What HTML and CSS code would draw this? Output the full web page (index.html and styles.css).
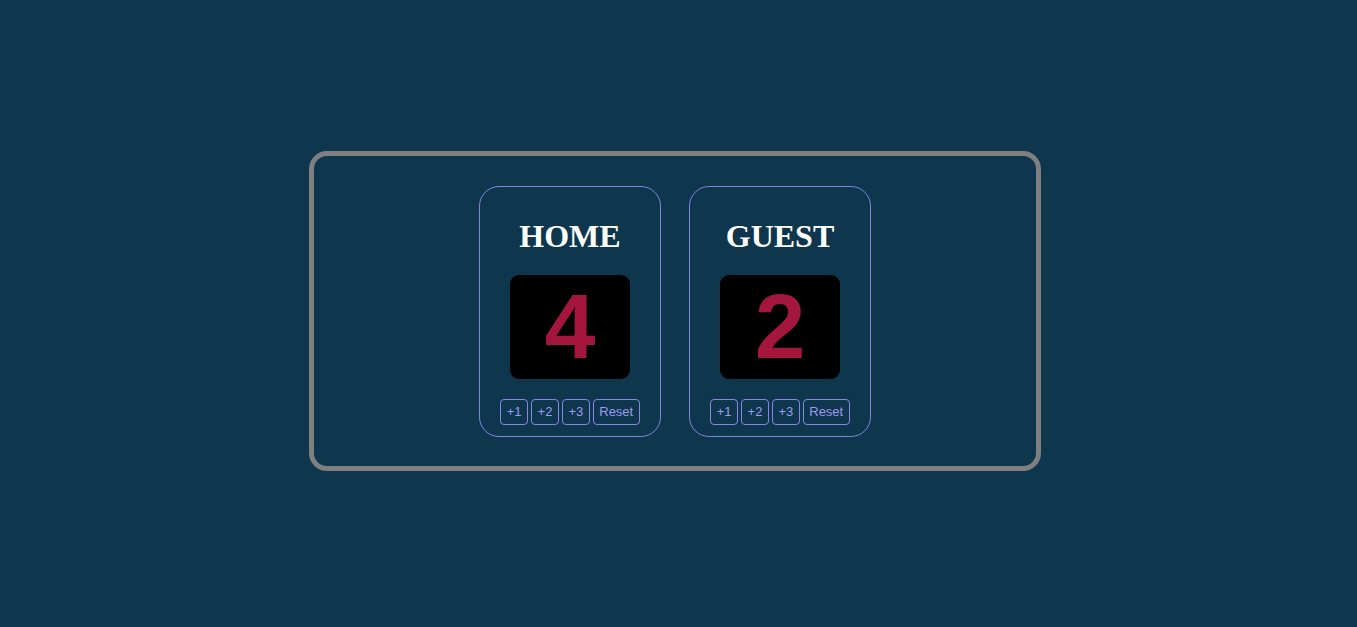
FILE: index.html
```html
<!DOCTYPE html>
<html>
<head>
<meta charset="utf-8">
<link rel="stylesheet" href="styles.css">
</head>
<body>
<main class="board">
  <section class="team">
    <h1 class="team-name">HOME</h1>
    <div class="score">4</div>
    <div class="controls">
      <button class="btn">+1</button>
      <button class="btn">+2</button>
      <button class="btn">+3</button>
      <button class="btn">Reset</button>
    </div>
  </section>
  <section class="team">
    <h1 class="team-name">GUEST</h1>
    <div class="score">2</div>
    <div class="controls">
      <button class="btn">+1</button>
      <button class="btn">+2</button>
      <button class="btn">+3</button>
      <button class="btn">Reset</button>
    </div>
  </section>
</main>
</body>
</html>
```
FILE: styles.css
```css
html, body {
  margin: 0;
  padding: 0;
}
body {
  background: #0e364d;
  font-family: "Liberation Serif", "Times New Roman", serif;
  min-height: 627px;
  padding-top: 151px;
  box-sizing: border-box;
}
.board {
  box-sizing: border-box;
  width: 732px;
  height: 320px;
  margin-left: 309px;
  border: 5px solid #7f7f7f;
  border-radius: 18px;
  display: flex;
  justify-content: center;
  align-items: center;
  gap: 28px;
}
.team {
  box-sizing: border-box;
  width: 182px;
  height: 251px;
  border: 1px solid #8683e0;
  border-radius: 20px;
  display: flex;
  flex-direction: column;
  align-items: center;
  padding-top: 31px;
}
.team-name {
  margin: 0;
  font-size: 32px;
  font-weight: bold;
  color: #ffffff;
  line-height: 37px;
}
.score {
  margin-top: 20px;
  width: 120px;
  height: 104px;
  background: #000000;
  border-radius: 9px;
  color: #a5163f;
  font-family: "Liberation Sans", Arial, sans-serif;
  font-weight: bold;
  font-size: 91px;
  line-height: 104px;
  text-align: center;
}
.controls {
  margin-top: 20px;
  display: flex;
  gap: 3px;
}
.btn {
  box-sizing: border-box;
  height: 26px;
  padding: 0 5.5px;
  background: transparent;
  border: 1px solid #8985e6;
  border-radius: 4px;
  color: #9e99f2;
  font-family: "Liberation Sans", Arial, sans-serif;
  font-size: 13px;
  cursor: pointer;
}
```
